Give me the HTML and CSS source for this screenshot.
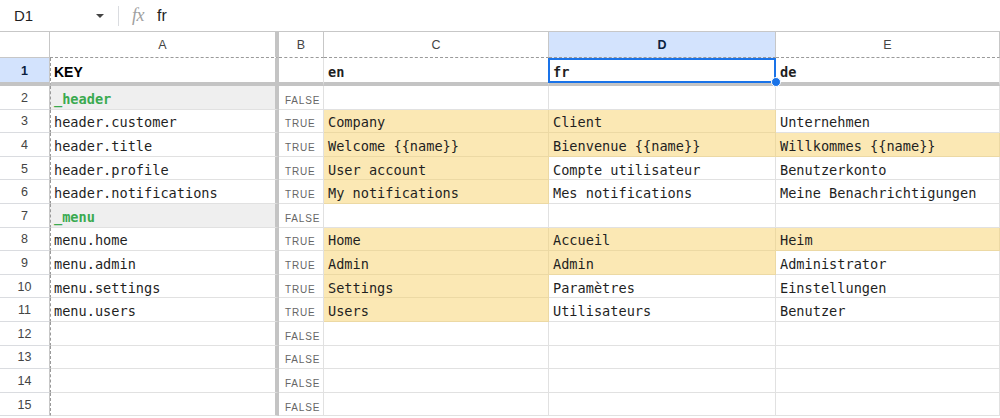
FILE: index.html
```html
<!DOCTYPE html>
<html>
<head>
<meta charset="utf-8">
<link rel="stylesheet" href="styles.css">
</head>
<body>
<div class="fbar">
  <div class="namebox"><span class="ref">D1</span><span class="caret"></span></div>
  <div class="sep"></div>
  <span class="fx">fx</span>
  <span class="fval">fr</span>
</div>
<div class="sheet">
  <div class="corner"></div>
  <div class="ch ca">A</div>
  <div class="ch">B</div>
  <div class="ch">C</div>
  <div class="ch ch-sel">D</div>
  <div class="ch">E</div>

  <div class="rh r1 rh-sel">1</div>
  <div class="c ca r1 hd-sans">KEY</div>
  <div class="c r1"></div>
  <div class="c r1 hd">en</div>
  <div class="c r1 hd sel">fr<span class="selbox"></span><span class="handle"></span></div>
  <div class="c r1 hd">de</div>

  <div class="rh">2</div>
  <div class="c ca sec">_header</div>
  <div class="c b">FALSE</div>
  <div class="c"></div><div class="c"></div><div class="c"></div>

  <div class="rh">3</div>
  <div class="c ca">header.customer</div>
  <div class="c b">TRUE</div>
  <div class="c y">Company</div><div class="c y">Client</div><div class="c">Unternehmen</div>

  <div class="rh">4</div>
  <div class="c ca">header.title</div>
  <div class="c b">TRUE</div>
  <div class="c y">Welcome {{name}}</div><div class="c y">Bienvenue {{name}}</div><div class="c y">Willkommes {{name}}</div>

  <div class="rh">5</div>
  <div class="c ca">header.profile</div>
  <div class="c b">TRUE</div>
  <div class="c y">User account</div><div class="c">Compte utilisateur</div><div class="c">Benutzerkonto</div>

  <div class="rh">6</div>
  <div class="c ca">header.notifications</div>
  <div class="c b">TRUE</div>
  <div class="c y">My notifications</div><div class="c">Mes notifications</div><div class="c">Meine Benachrichtigungen</div>

  <div class="rh">7</div>
  <div class="c ca sec">_menu</div>
  <div class="c b">FALSE</div>
  <div class="c"></div><div class="c"></div><div class="c"></div>

  <div class="rh">8</div>
  <div class="c ca">menu.home</div>
  <div class="c b">TRUE</div>
  <div class="c y">Home</div><div class="c y">Accueil</div><div class="c y">Heim</div>

  <div class="rh">9</div>
  <div class="c ca">menu.admin</div>
  <div class="c b">TRUE</div>
  <div class="c y">Admin</div><div class="c y">Admin</div><div class="c">Administrator</div>

  <div class="rh">10</div>
  <div class="c ca">menu.settings</div>
  <div class="c b">TRUE</div>
  <div class="c y">Settings</div><div class="c">Paramètres</div><div class="c">Einstellungen</div>

  <div class="rh">11</div>
  <div class="c ca">menu.users</div>
  <div class="c b">TRUE</div>
  <div class="c y">Users</div><div class="c">Utilisateurs</div><div class="c">Benutzer</div>

  <div class="rh">12</div>
  <div class="c ca"></div>
  <div class="c b">FALSE</div>
  <div class="c"></div><div class="c"></div><div class="c"></div>

  <div class="rh">13</div>
  <div class="c ca"></div>
  <div class="c b">FALSE</div>
  <div class="c"></div><div class="c"></div><div class="c"></div>

  <div class="rh">14</div>
  <div class="c ca"></div>
  <div class="c b">FALSE</div>
  <div class="c"></div><div class="c"></div><div class="c"></div>

  <div class="rh">15</div>
  <div class="c ca"></div>
  <div class="c b">FALSE</div>
  <div class="c"></div><div class="c"></div><div class="c"></div>
</div>
</body>
</html>
```
FILE: styles.css
```css
* { box-sizing: border-box; }
html, body { margin: 0; padding: 0; background: #fff; overflow: hidden; }
body { width: 1000px; height: 418px; font-family: "Liberation Sans", Arial, sans-serif; color: #1f1f1f; }

.fbar {
  height: 32px;
  border-bottom: 1px solid #c7c7c7;
  display: flex;
  align-items: center;
}
.namebox {
  width: 118px;
  display: flex;
  align-items: center;
  padding-left: 14px;
  padding-right: 14px;
}
.ref { font-size: 15px; color: #1f1f1f; flex: 1; }
.caret {
  width: 0; height: 0;
  border-left: 4.5px solid transparent;
  border-right: 4.5px solid transparent;
  border-top: 4.5px solid #444;
}
.sep { width: 1px; height: 20px; background: #dadce0; }
.fx {
  font-family: "Liberation Serif", "Times New Roman", serif;
  font-style: italic;
  font-size: 18px;
  color: #a0a0a0;
  margin-left: 13px;
  letter-spacing: -0.5px;
}
.fval { font-size: 16px; margin-left: 13px; color: #1f1f1f; }

.sheet {
  display: grid;
  grid-template-columns: 50px 229px 45px 225px 227px 224px;
  grid-template-rows: 26px 28px repeat(14, 23.6px);
}

.corner {
  border-right: 1px solid #c7c7c7;
  border-bottom: 1px solid #c7c7c7;
}
.ch {
  display: flex;
  align-items: center;
  justify-content: center;
  font-size: 12.5px;
  color: #444;
  border-right: 1px solid #c7c7c7;
  border-bottom: 1px dashed #9a9a9a;
}
.ch.ca { border-right: 4px solid #c4c4c4; }
.ch-sel { background: #d3e3fd; color: #0b1f3f; font-weight: bold; }

.rh {
  display: flex;
  align-items: center;
  justify-content: center;
  font-size: 12.5px;
  color: #444;
  padding-top: 1px;
  border-right: 1px solid #c7c7c7;
  border-bottom: 1px solid #dadce0;
}
.rh-sel { background: #d3e3fd; color: #0b1f3f; font-weight: bold; }

.c {
  display: flex;
  align-items: center;
  padding: 3px 4px 0 4px;
  font-family: "DejaVu Sans Mono", "Liberation Mono", monospace;
  font-size: 13.6px;
  color: #1f1f1f;
  white-space: nowrap;
  overflow: hidden;
  border-right: 1px solid #e1e1e1;
  border-bottom: 1px solid #e1e1e1;
}
.c.ca {
  border-left: 1px dashed #9a9a9a;
  border-right: 4px solid #c4c4c4;
  padding-left: 3px;
}
.r1, .rh.r1 { border-bottom: 4px solid #c4c4c4; padding-top: 4px; }
.rh.r1 { padding-top: 2px; }
.hd { font-weight: bold; }
.hd-sans {
  font-family: "Liberation Sans", Arial, sans-serif;
  font-weight: bold;
  font-size: 14px;
  color: #000;
}
.sec { background: #efefef; color: #3aaa4f; font-weight: bold; }
.b {
  font-family: "Liberation Sans", Arial, sans-serif;
  font-size: 10px;
  letter-spacing: 0.8px;
  color: #666;
  padding-left: 6px;
  padding-top: 6px;
}
.y { background: #fbe8b4; border-right-color: #ecd9a4; border-bottom-color: #ecd9a4; }

.sel { position: relative; overflow: visible; }
.selbox {
  position: absolute;
  left: -1px; top: 0; right: -1px; bottom: -1px;
  border: 2px solid #1a73e8;
  pointer-events: none;
}
.handle {
  position: absolute;
  right: -6px; bottom: -5px;
  width: 10px; height: 10px;
  border-radius: 50%;
  background: #1a73e8;
  border: 1px solid #fff;
  z-index: 2;
}
```
